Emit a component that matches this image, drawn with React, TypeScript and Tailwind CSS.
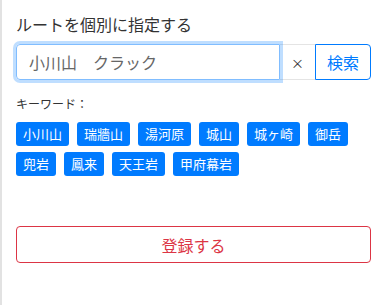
import { useState } from "react";

const keywords = ["小川山", "瑞牆山", "湯河原", "城山", "城ヶ崎", "御岳", "兜岩", "鳳来", "天王岩", "甲府幕岩"];

const App = () => {
  const [query, setQuery] = useState("小川山　クラック");

  return (
    <div
      className="w-[387px] h-[305px] bg-white border-l-2 border-[#e2e2e2] pl-[14px] pr-[16px] pt-[12px] text-[#333]"
      style={{ fontFamily: '"Noto Sans CJK JP", "Noto Sans", sans-serif' }}
    >
      <h2 className="text-[16px] leading-[24px] mb-[8px]">ルートを個別に指定する</h2>

      <div className="flex h-[36px]">
        <input
          value={query}
          onChange={(e) => setQuery(e.target.value)}
          className="flex-1 min-w-0 h-full px-[12px] text-[16px] text-[#666] border border-[#80bdff] rounded-l-[4px] outline-none shadow-[0_0_0_3px_rgba(0,123,255,0.25)] relative z-10"
        />
        <button
          onClick={() => setQuery("")}
          className="w-[35px] h-full border-y border-[#e4e4e4] text-[13px] text-[#333] flex items-center justify-center pt-[2px]"
        >
          ×
        </button>
        <button className="w-[56px] h-full border border-[#007bff] text-[#007bff] rounded-r-[4px] text-[16px]">
          検索
        </button>
      </div>

      <div className="mt-[15px] text-[12px] leading-[18px]">キーワード：</div>

      <div className="mt-[9px] flex flex-wrap gap-x-[8px] gap-y-[6px]">
        {keywords.map((k) => (
          <button
            key={k}
            onClick={() => setQuery(k)}
            className="h-[24px] px-[7px] bg-[#007bff] text-white text-[13px] leading-[24px] rounded-[3px]"
          >
            {k}
          </button>
        ))}
      </div>

      <button className="mt-[50px] w-full h-[37px] border border-[#dc3545] text-[#dc3545] rounded-[4px] text-[16px]">
        登録する
      </button>
    </div>
  );
};

export default App;
